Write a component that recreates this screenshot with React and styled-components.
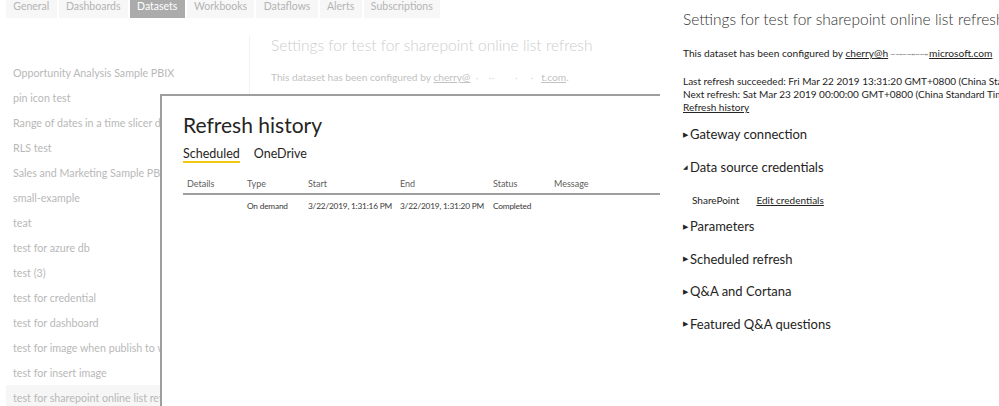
import styled, { createGlobalStyle } from 'styled-components';

const GlobalStyle = createGlobalStyle`
  html, body {
    margin: 0;
    padding: 0;
    background: #ffffff;
  }
  body {
    font-family: Lato, "Open Sans", sans-serif;
    color: #252423;
  }
`;

const tabs = ['General', 'Dashboards', 'Datasets', 'Workbooks', 'Dataflows', 'Alerts', 'Subscriptions'];

const datasets = [
  'Opportunity Analysis Sample PBIX',
  'pin icon test',
  'Range of dates in a time slicer does not work',
  'RLS test',
  'Sales and Marketing Sample PBIX',
  'small-example',
  'teat',
  'test for azure db',
  'test (3)',
  'test for credential',
  'test for dashboard',
  'test for image when publish to web',
  'test for insert image',
  'test for sharepoint online list refresh',
];

const columns = [
  { label: 'Details', width: 60 },
  { label: 'Type', width: 61 },
  { label: 'Start', width: 92 },
  { label: 'End', width: 93 },
  { label: 'Status', width: 61 },
  { label: 'Message', width: 110 },
];

const rows = [['', 'On demand', '3/22/2019, 1:31:16 PM', '3/22/2019, 1:31:20 PM', 'Completed', '']];

const sections = [
  { title: 'Gateway connection' },
  { title: 'Data source credentials', open: true },
  { title: 'Parameters' },
  { title: 'Scheduled refresh' },
  { title: 'Q&A and Cortana' },
  { title: 'Featured Q&A questions' },
];

export default function App() {
  return (
    <>
      <GlobalStyle />
      <Page>
        <LeftPane>
          <TabBar>
            {tabs.map((t) => (
              <Tab key={t} $active={t === 'Datasets'}>
                {t}
              </Tab>
            ))}
          </TabBar>
          <Body>
            <DatasetList>
              {datasets.map((d, i) => (
                <DatasetItem key={d} $selected={i === datasets.length - 1}>
                  {d}
                </DatasetItem>
              ))}
            </DatasetList>
            <Divider />
            <FadedSettings>
              <FadedTitle>Settings for test for sharepoint online list refresh</FadedTitle>
              <FadedText>
                This dataset has been configured by <u>cherry@</u>
                <Redacted>{'  ·    ··        ·     ·   '}</Redacted>
                <u>t.com</u>.
              </FadedText>
            </FadedSettings>
          </Body>

          <Modal>
            <ModalTitle>Refresh history</ModalTitle>
            <ModalTabs>
              <ModalTab $active>Scheduled</ModalTab>
              <ModalTab>OneDrive</ModalTab>
            </ModalTabs>
            <Table>
              <colgroup>
                {columns.map((c) => (
                  <col key={c.label} style={{ width: c.width }} />
                ))}
              </colgroup>
              <thead>
                <tr>
                  {columns.map((c) => (
                    <Th key={c.label}>{c.label}</Th>
                  ))}
                </tr>
              </thead>
              <tbody>
                {rows.map((r, i) => (
                  <tr key={i}>
                    {r.map((cell, j) => (
                      <Td key={j}>{cell}</Td>
                    ))}
                  </tr>
                ))}
              </tbody>
            </Table>
          </Modal>
        </LeftPane>

        <RightPane>
          <SettingsTitle>Settings for test for sharepoint online list refresh</SettingsTitle>
          <InfoLine>
            This dataset has been configured by <Link>cherry@h</Link>
            <Scribble> ––·––··––·· </Scribble>
            <Link>microsoft.com</Link>
          </InfoLine>
          <RefreshInfo>
            <div>Last refresh succeeded: Fri Mar 22 2019 13:31:20 GMT+0800 (China Standard Time)</div>
            <div>Next refresh: Sat Mar 23 2019 00:00:00 GMT+0800 (China Standard Time)</div>
            <Link>Refresh history</Link>
          </RefreshInfo>
          <Sections>
            {sections.map((s) => (
              <Section key={s.title}>
                <SectionHeader>
                  <Caret $open={s.open}>{s.open ? '◢' : '▶'}</Caret>
                  {s.title}
                </SectionHeader>
                {s.open && (
                  <CredentialRow>
                    <span>SharePoint</span>
                    <Link>Edit credentials</Link>
                  </CredentialRow>
                )}
              </Section>
            ))}
          </Sections>
        </RightPane>
      </Page>
    </>
  );
}

const Page = styled.div`
  width: 999px;
  height: 406px;
  display: flex;
  overflow: hidden;
  background: #ffffff;
`;

const LeftPane = styled.div`
  position: relative;
  width: 660px;
  flex-shrink: 0;
  overflow: hidden;
`;

const TabBar = styled.div`
  display: flex;
  gap: 2px;
  padding-left: 6px;
  height: 18px;
`;

const Tab = styled.div`
  padding: 0 7.3px;
  height: 18px;
  line-height: 13px;
  font-size: 10.5px;
  color: ${(p) => (p.$active ? '#ffffff' : '#b4b4b4')};
  background: ${(p) => (p.$active ? '#ababab' : '#f7f7f7')};
  white-space: nowrap;
`;

const Body = styled.div`
  display: flex;
`;

const DatasetList = styled.div`
  width: 249px;
  padding-top: 42px;
  display: flex;
  flex-direction: column;
`;

const DatasetItem = styled.div`
  height: 25px;
  line-height: 25px;
  margin-left: 6px;
  padding-left: 7px;
  font-size: 10.7px;
  color: #b8b8b8;
  white-space: nowrap;
  overflow: hidden;
  background: ${(p) => (p.$selected ? '#f6f6f6' : 'transparent')};
`;

const Divider = styled.div`
  width: 1px;
  margin-top: 18px;
  height: 80px;
  background: #f2f2f2;
`;

const FadedSettings = styled.div`
  padding-left: 21px;
  padding-top: 16px;
`;

const FadedTitle = styled.div`
  font-size: 15.5px;
  font-weight: 300;
  line-height: 22px;
  color: #cdcdcd;
  white-space: nowrap;
`;

const FadedText = styled.div`
  margin-top: 15px;
  font-size: 10.2px;
  color: #c2c2c2;
  white-space: nowrap;
`;

const Redacted = styled.span`
  white-space: pre;
  color: #dcdcdc;
`;

const Modal = styled.div`
  position: absolute;
  left: 160px;
  top: 94px;
  right: 0;
  bottom: 0;
  background: #ffffff;
  border-top: 2px solid #9e9e9e;
  border-left: 2px solid #9e9e9e;
  padding: 14px 0 0 21px;
`;

const ModalTitle = styled.div`
  font-size: 21px;
  color: #252423;
  line-height: 30px;
`;

const ModalTabs = styled.div`
  display: flex;
  gap: 14px;
  margin-top: 6px;
`;

const ModalTab = styled.div`
  font-size: 12.5px;
  color: #252423;
  line-height: 15px;
  border-bottom: 2px solid ${(p) => (p.$active ? '#f2c811' : 'transparent')};
`;

const Table = styled.table`
  margin-top: 15px;
  border-collapse: collapse;
  width: 477px;
  table-layout: fixed;
`;

const Th = styled.th`
  text-align: left;
  font-weight: 400;
  font-size: 9px;
  color: #605e5c;
  padding: 0 0 4px 4px;
  border-bottom: 2px solid #9e9e9e;
  white-space: nowrap;
`;

const Td = styled.td`
  font-size: 8.3px;
  letter-spacing: -0.2px;
  color: #3b3a39;
  padding: 6px 0 0 4px;
  white-space: nowrap;
`;

const RightPane = styled.div`
  flex: 1;
  padding: 9px 0 0 23px;
  overflow: hidden;
  white-space: nowrap;
  color: #252423;
`;

const SettingsTitle = styled.div`
  font-size: 15.5px;
  font-weight: 300;
  color: #333333;
  line-height: 20px;
`;

const InfoLine = styled.div`
  margin-top: 18px;
  font-size: 10.2px;
  line-height: 13px;
`;

const Link = styled.span`
  text-decoration: underline;
  color: #252423;
`;

const Scribble = styled.span`
  white-space: pre;
  color: #888888;
  letter-spacing: -1px;
`;

const RefreshInfo = styled.div`
  margin-top: 15px;
  font-size: 10px;
  line-height: 13px;
`;

const Sections = styled.div`
  margin-top: 4px;
  display: flex;
  flex-direction: column;
`;

const Section = styled.div`
  display: flex;
  flex-direction: column;
`;

const SectionHeader = styled.div`
  display: flex;
  align-items: center;
  height: 32.5px;
  font-size: 13px;
  color: #252423;
`;

const Caret = styled.span`
  font-size: ${(p) => (p.$open ? '6px' : '7px')};
  width: 6px;
  margin-right: 1px;
  color: #252423;
`;

const CredentialRow = styled.div`
  display: flex;
  gap: 17px;
  padding: 6px 0 0 9px;
  height: 21px;
  align-items: center;
  font-size: 10px;
`;
